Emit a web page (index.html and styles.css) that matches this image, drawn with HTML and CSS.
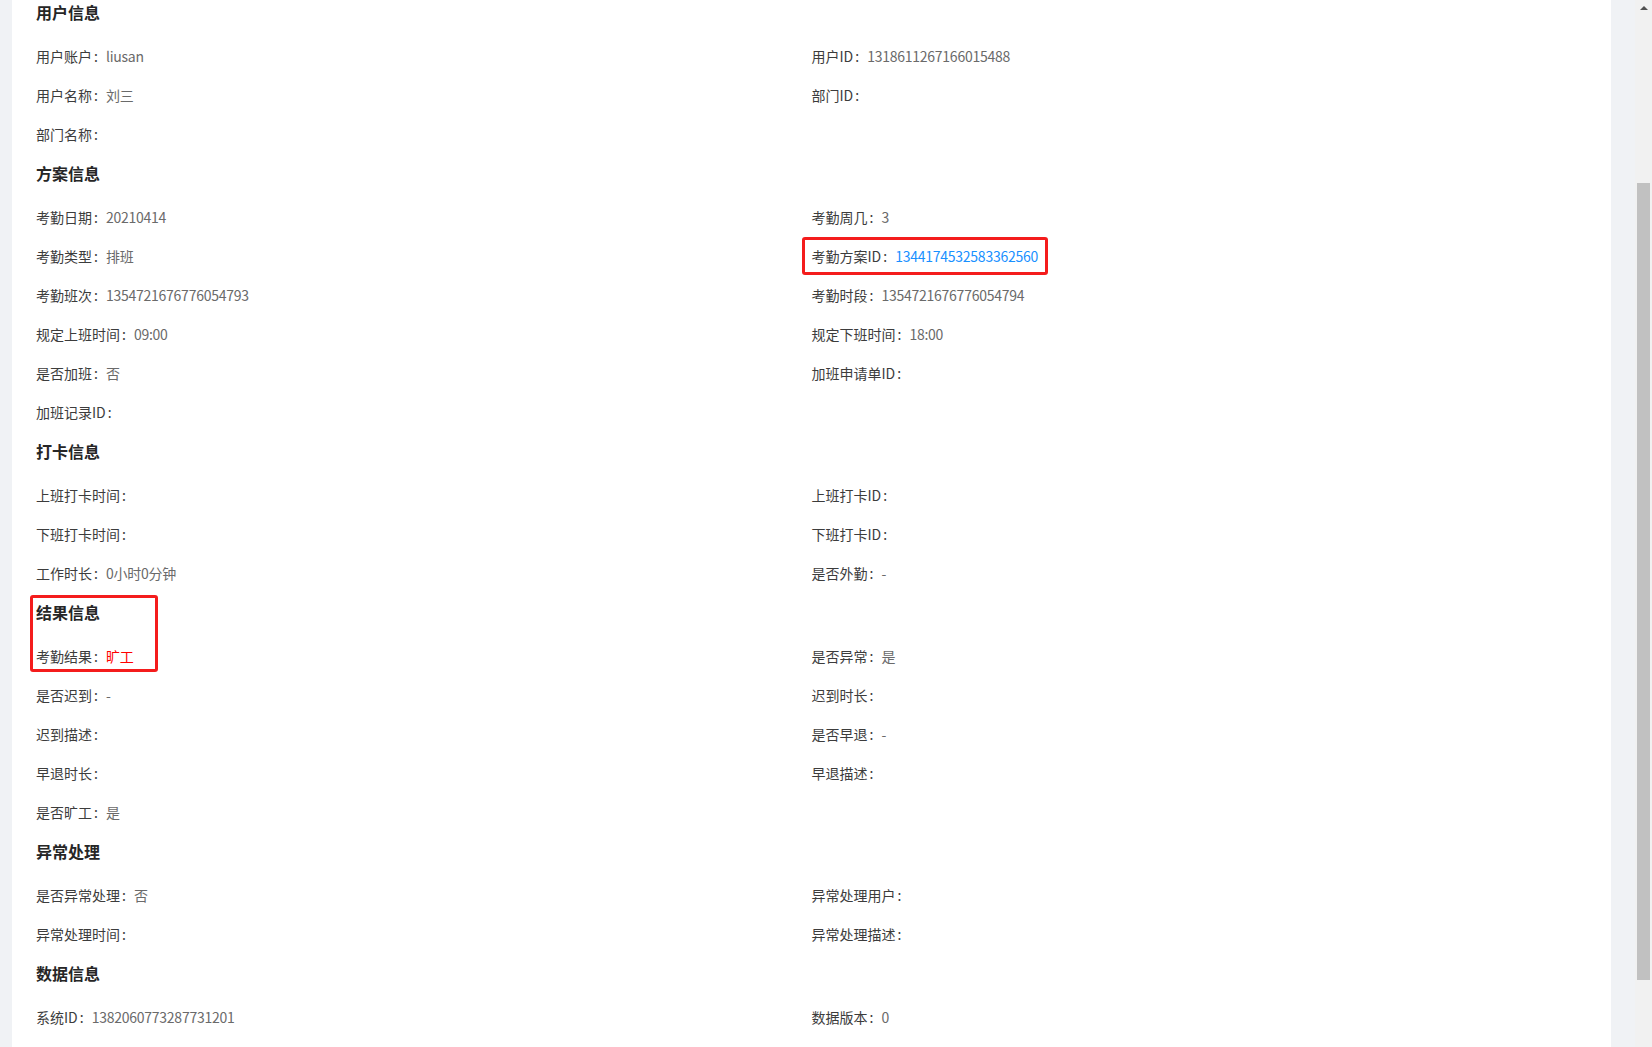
FILE: index.html
```html
<!DOCTYPE html>
<html lang="zh-CN">
<head>
<meta charset="utf-8">
<title>考勤详情</title>
<link rel="stylesheet" href="styles.css">
</head>
<body>
<div class="layout">
  <main class="main">
    <div class="panel">
      <section class="desc">
        <h3 class="desc-title">用户信息</h3>
        <div class="desc-grid">
          <div class="item"><span class="label">用户账户<span class="colon">:</span></span><span class="value">liusan</span></div>
          <div class="item"><span class="label">用户ID<span class="colon">:</span></span><span class="value">1318611267166015488</span></div>
          <div class="item"><span class="label">用户名称<span class="colon">:</span></span><span class="value">刘三</span></div>
          <div class="item"><span class="label">部门ID<span class="colon">:</span></span><span class="value"></span></div>
          <div class="item"><span class="label">部门名称<span class="colon">:</span></span><span class="value"></span></div>
        </div>
      </section>
      <section class="desc">
        <h3 class="desc-title">方案信息</h3>
        <div class="desc-grid">
          <div class="item"><span class="label">考勤日期<span class="colon">:</span></span><span class="value">20210414</span></div>
          <div class="item"><span class="label">考勤周几<span class="colon">:</span></span><span class="value">3</span></div>
          <div class="item"><span class="label">考勤类型<span class="colon">:</span></span><span class="value">排班</span></div>
          <div class="item"><span class="label">考勤方案ID<span class="colon">:</span></span><span class="value link">1344174532583362560</span></div>
          <div class="item"><span class="label">考勤班次<span class="colon">:</span></span><span class="value">1354721676776054793</span></div>
          <div class="item"><span class="label">考勤时段<span class="colon">:</span></span><span class="value">1354721676776054794</span></div>
          <div class="item"><span class="label">规定上班时间<span class="colon">:</span></span><span class="value">09:00</span></div>
          <div class="item"><span class="label">规定下班时间<span class="colon">:</span></span><span class="value">18:00</span></div>
          <div class="item"><span class="label">是否加班<span class="colon">:</span></span><span class="value">否</span></div>
          <div class="item"><span class="label">加班申请单ID<span class="colon">:</span></span><span class="value"></span></div>
          <div class="item"><span class="label">加班记录ID<span class="colon">:</span></span><span class="value"></span></div>
        </div>
      </section>
      <section class="desc">
        <h3 class="desc-title">打卡信息</h3>
        <div class="desc-grid">
          <div class="item"><span class="label">上班打卡时间<span class="colon">:</span></span><span class="value"></span></div>
          <div class="item"><span class="label">上班打卡ID<span class="colon">:</span></span><span class="value"></span></div>
          <div class="item"><span class="label">下班打卡时间<span class="colon">:</span></span><span class="value"></span></div>
          <div class="item"><span class="label">下班打卡ID<span class="colon">:</span></span><span class="value"></span></div>
          <div class="item"><span class="label">工作时长<span class="colon">:</span></span><span class="value">0小时0分钟</span></div>
          <div class="item"><span class="label">是否外勤<span class="colon">:</span></span><span class="value">-</span></div>
        </div>
      </section>
      <section class="desc">
        <h3 class="desc-title">结果信息</h3>
        <div class="desc-grid">
          <div class="item"><span class="label">考勤结果<span class="colon">:</span></span><span class="value danger">旷工</span></div>
          <div class="item"><span class="label">是否异常<span class="colon">:</span></span><span class="value">是</span></div>
          <div class="item"><span class="label">是否迟到<span class="colon">:</span></span><span class="value">-</span></div>
          <div class="item"><span class="label">迟到时长<span class="colon">:</span></span><span class="value"></span></div>
          <div class="item"><span class="label">迟到描述<span class="colon">:</span></span><span class="value"></span></div>
          <div class="item"><span class="label">是否早退<span class="colon">:</span></span><span class="value">-</span></div>
          <div class="item"><span class="label">早退时长<span class="colon">:</span></span><span class="value"></span></div>
          <div class="item"><span class="label">早退描述<span class="colon">:</span></span><span class="value"></span></div>
          <div class="item"><span class="label">是否旷工<span class="colon">:</span></span><span class="value">是</span></div>
        </div>
      </section>
      <section class="desc">
        <h3 class="desc-title">异常处理</h3>
        <div class="desc-grid">
          <div class="item"><span class="label">是否异常处理<span class="colon">:</span></span><span class="value">否</span></div>
          <div class="item"><span class="label">异常处理用户<span class="colon">:</span></span><span class="value"></span></div>
          <div class="item"><span class="label">异常处理时间<span class="colon">:</span></span><span class="value"></span></div>
          <div class="item"><span class="label">异常处理描述<span class="colon">:</span></span><span class="value"></span></div>
        </div>
      </section>
      <section class="desc">
        <h3 class="desc-title">数据信息</h3>
        <div class="desc-grid">
          <div class="item"><span class="label">系统ID<span class="colon">:</span></span><span class="value">1382060773287731201</span></div>
          <div class="item"><span class="label">数据版本<span class="colon">:</span></span><span class="value">0</span></div>
        </div>
      </section>
    </div>
  </main>
  <div class="scrollbar">
    <div class="sb-button"><span class="sb-arrow"></span></div>
    <div class="sb-track"><div class="sb-thumb"></div></div>
  </div>
</div>
<div class="mark mark-plan"></div>
<div class="mark mark-result"></div>
</body>
</html>
```
FILE: styles.css
```css
html, body {
  margin: 0;
  padding: 0;
  height: 100%;
  overflow: hidden;
}

body {
  background: #f0f2f5;
  font-family: "Noto Sans CJK SC", "Noto Sans", sans-serif;
  font-size: 14px;
  color: rgba(0, 0, 0, 0.85);
  position: relative;
}

.layout {
  display: flex;
  height: 100vh;
}

.main {
  flex: 1;
  padding: 0 24px 0 12px;
  min-width: 0;
}

.panel {
  background: #fff;
  height: 100%;
  padding: 1px 24px 0;
  box-sizing: border-box;
  overflow: hidden;
}

.desc-title {
  margin: 0 0 22px;
  font-size: 16px;
  line-height: 22px;
  font-weight: 700;
  color: #262626;
}

.desc-grid {
  display: grid;
  grid-template-columns: 1fr 1fr;
}

.item {
  line-height: 22px;
  padding-bottom: 17px;
  white-space: nowrap;
}

.label {
  color: #3c3c3c;
  margin-right: 8px;
}

.colon {
  margin-left: 2px;
}

.value {
  color: #6a6a6a;
  letter-spacing: -0.25px;
}

.value.link {
  color: #1890ff;
}

.value.danger {
  color: #ff0000;
}

/* scrollbar column */
.scrollbar {
  width: 17px;
  background: #f1f1f1;
  display: flex;
  flex-direction: column;
}

.sb-button {
  height: 17px;
  display: flex;
  justify-content: center;
  align-items: flex-start;
  padding-top: 6px;
  box-sizing: border-box;
}

.sb-arrow {
  width: 0;
  height: 0;
  border-left: 4px solid transparent;
  border-right: 4px solid transparent;
  border-bottom: 4px solid #505050;
}

.sb-track {
  flex: 1;
  padding-top: 166px;
}

.sb-thumb {
  height: 797px;
  margin: 0 2px;
  background: #c1c1c1;
}

/* red annotation boxes drawn over the screenshot */
.mark {
  position: absolute;
  border: 3px solid #f41c1c;
  border-radius: 3px;
  box-sizing: border-box;
  pointer-events: none;
}

.mark-plan {
  left: 802px;
  top: 237px;
  width: 246px;
  height: 38px;
}

.mark-result {
  left: 30px;
  top: 595px;
  width: 128px;
  height: 77px;
}
```
